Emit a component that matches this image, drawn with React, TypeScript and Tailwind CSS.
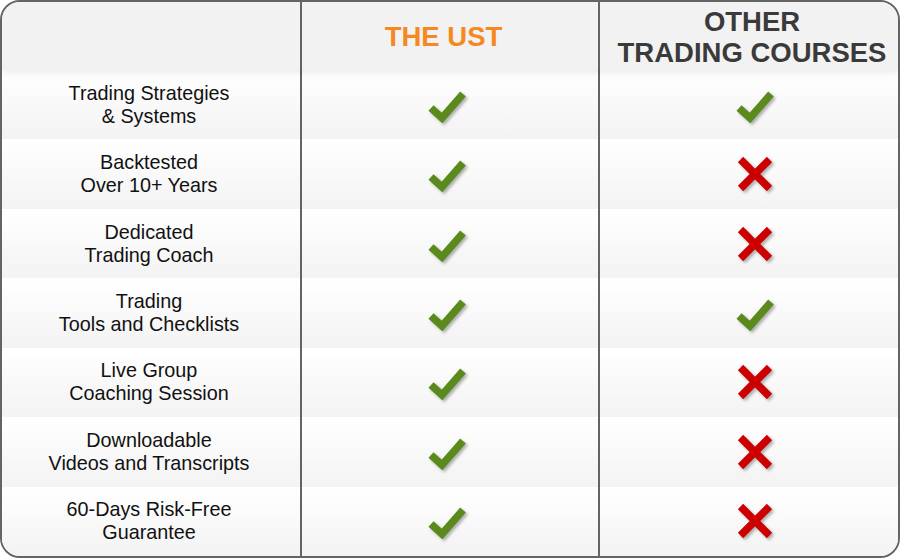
const rows: { label: [string, string]; ust: boolean; other: boolean }[] = [
  { label: ["Trading Strategies", "& Systems"], ust: true, other: true },
  { label: ["Backtested", "Over 10+ Years"], ust: true, other: false },
  { label: ["Dedicated", "Trading Coach"], ust: true, other: false },
  { label: ["Trading", "Tools and Checklists"], ust: true, other: true },
  { label: ["Live Group", "Coaching Session"], ust: true, other: false },
  { label: ["Downloadable", "Videos and Transcripts"], ust: true, other: false },
  { label: ["60-Days Risk-Free", "Guarantee"], ust: true, other: false },
];

function Check() {
  return (
    <svg width="40" height="40" viewBox="0 0 40 40" className="drop-shadow-[2px_2px_1.5px_rgba(0,0,0,0.3)]">
      <path d="M4 23 L15 33 L36 9" fill="none" stroke="#5a8a1c" strokeWidth="7.5" strokeLinecap="butt" strokeLinejoin="miter" />
    </svg>
  );
}

function Cross() {
  return (
    <svg width="40" height="40" viewBox="0 0 40 40" className="drop-shadow-[2px_2px_1.5px_rgba(0,0,0,0.3)]">
      <path d="M5.5 5.5 L34.5 34.5 M34.5 5.5 L5.5 34.5" fill="none" stroke="#cc0000" strokeWidth="7.5" strokeLinecap="butt" />
    </svg>
  );
}

export default function App() {
  return (
    <div className="w-[900px] h-[558px] bg-white" style={{ fontFamily: '"Liberation Sans", Arial, sans-serif' }}>
      <div className="h-full flex flex-col border-2 border-[#646464] rounded-[20px] overflow-hidden">
        {/* header */}
        <div className="relative z-10 h-[68px] flex bg-[#f2f2f2] shadow-[0_3px_7px_rgba(0,0,0,0.08)]">
          <div className="w-[298px]" />
          <div className="w-[298px] border-l-2 border-[#646464] flex items-center justify-center pt-[2px] pr-[13px]">
            <span className="text-[27.5px] font-bold text-[#f5891f] leading-none">THE UST</span>
          </div>
          <div className="flex-1 border-l-2 border-[#646464] flex flex-col items-center justify-center text-[27.5px] font-bold text-[#3a3a3a] leading-[31px] pl-[6px] pt-[2px]">
            <span>OTHER</span>
            <span>TRADING COURSES</span>
          </div>
        </div>

        {rows.map((r) => (
          <div key={r.label[0]} className="flex-1 flex bg-gradient-to-b from-white to-[#f3f3f3]">
            <div className="w-[298px] flex flex-col items-center justify-center text-[19.8px] leading-[23px] text-[#111] pr-[4px]">
              <span>{r.label[0]}</span>
              <span>{r.label[1]}</span>
            </div>
            <div className="w-[298px] border-l-2 border-[#646464] flex items-center justify-center pr-[6px]">
              {r.ust ? <Check /> : <Cross />}
            </div>
            <div className="flex-1 border-l-2 border-[#646464] flex items-center justify-center pl-[12px]">
              {r.other ? <Check /> : <Cross />}
            </div>
          </div>
        ))}
      </div>
    </div>
  );
}
